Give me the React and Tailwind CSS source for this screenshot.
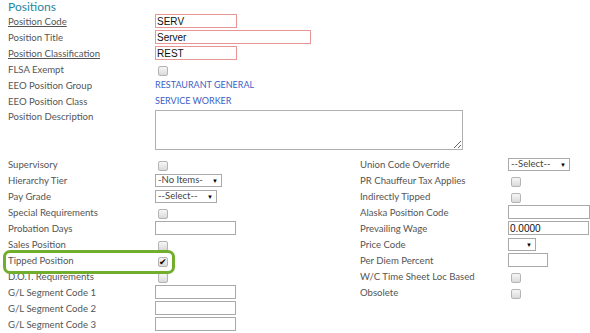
import React from 'react';

// --- small form pieces ---
const Check = ({ checked }) => (
  <span className="ml-[3px] mt-[3px] flex h-[10px] w-[10px] items-center justify-center rounded-[2px] border border-[#b4b4b4] bg-gradient-to-b from-[#f6f6f6] to-[#dadada] text-[9px] leading-none text-black">
    {checked ? '✔' : null}
  </span>
);

const TextBox = ({ w, value, error }) => (
  <div
    className={`flex h-[14px] items-center overflow-hidden border bg-white pl-[1px] font-['Liberation_Sans',sans-serif] text-[10px] text-[#111] ${
      error ? 'border-[#e79595]' : 'border-[#a9a9a9]'
    } ${w}`}
  >
    {value}
  </div>
);

const Select = ({ w, value }) => (
  <div className={`flex h-[13px] items-center justify-between border border-[#a9a9a9] bg-white pl-[2px] pr-[3px] text-[9.5px] text-[#444] ${w}`}>
    <span>{value}</span>
    <span className="text-[6px] text-black">▼</span>
  </div>
);

const Row = ({ label, link, labelW = 'w-[147px]', children }) => (
  <div className="flex h-4 items-start">
    <div className={`${labelW} shrink-0 pt-[3px] text-[9.6px] leading-[12px] text-[#555] ${link ? 'underline' : ''}`}>
      {label}
    </div>
    <div className="flex h-4 items-center">{children}</div>
  </div>
);

export default function App() {
  return (
    <div className="relative h-[333px] w-[590px] overflow-hidden bg-white pl-2 font-['Lato',sans-serif]">
      <div className="h-[13px] pt-[1px] text-[12px] leading-[12px] text-[#1f85a3]">Positions</div>

      <Row label="Position Code" link>
        <TextBox w="w-[82px]" value="SERV" error />
      </Row>
      <Row label="Position Title">
        <TextBox w="w-[156px]" value="Server" error />
      </Row>
      <Row label="Position Classification" link>
        <TextBox w="w-[82px]" value="REST" error />
      </Row>
      <Row label="FLSA Exempt">
        <Check />
      </Row>
      <Row label="EEO Position Group">
        <span className="text-[9px] text-[#3d62c4]">RESTAURANT GENERAL</span>
      </Row>
      <Row label="EEO Position Class">
        <span className="text-[9px] text-[#3d62c4]">SERVICE WORKER</span>
      </Row>

      <div className="flex h-[41px] items-start">
        <div className="w-[147px] shrink-0 pt-[2px] text-[9.6px] leading-[12px] text-[#555]">Position Description</div>
        <textarea
          readOnly
          className="mt-[1px] h-[40px] w-[308px] resize border border-[#b0b0b0] bg-white"
        />
      </div>

      <div className="mt-[6px] grid grid-cols-[352px_1fr]">
        <div className="flex flex-col">
          <Row label="Supervisory"><Check /></Row>
          <Row label="Hierarchy Tier"><Select w="w-[67px]" value="-No Items-" /></Row>
          <Row label="Pay Grade"><Select w="w-[62px]" value="--Select--" /></Row>
          <Row label="Special Requirements"><Check /></Row>
          <Row label="Probation Days"><TextBox w="w-[81px]" /></Row>
          <Row label="Sales Position"><Check /></Row>
          <Row label="Tipped Position"><Check checked /></Row>
          <Row label="D.O.T. Requirements"><Check /></Row>
          <Row label="G/L Segment Code 1"><TextBox w="w-[81px]" /></Row>
          <Row label="G/L Segment Code 2"><TextBox w="w-[81px]" /></Row>
          <Row label="G/L Segment Code 3"><TextBox w="w-[81px]" /></Row>
        </div>
        <div className="flex flex-col">
          <Row labelW="w-[148px]" label="Union Code Override"><Select w="w-[62px]" value="--Select--" /></Row>
          <Row labelW="w-[148px]" label="PR Chauffeur Tax Applies"><Check /></Row>
          <Row labelW="w-[148px]" label="Indirectly Tipped"><Check /></Row>
          <Row labelW="w-[148px]" label="Alaska Position Code"><TextBox w="w-[82px]" /></Row>
          <Row labelW="w-[148px]" label="Prevailing Wage"><TextBox w="w-[81px]" value="0.0000" /></Row>
          <Row labelW="w-[148px]" label="Price Code"><Select w="w-[28px]" value="" /></Row>
          <Row labelW="w-[148px]" label="Per Diem Percent"><TextBox w="w-[40px]" /></Row>
          <Row labelW="w-[148px]" label="W/C Time Sheet Loc Based"><Check /></Row>
          <Row labelW="w-[148px]" label="Obsolete"><Check /></Row>
        </div>
      </div>

      {/* highlight round the tipped row */}
      <div className="pointer-events-none absolute left-[3px] top-[250px] h-[24px] w-[172px] rounded-[7px] border-[3px] border-[#72ae2e]" />
    </div>
  );
}
